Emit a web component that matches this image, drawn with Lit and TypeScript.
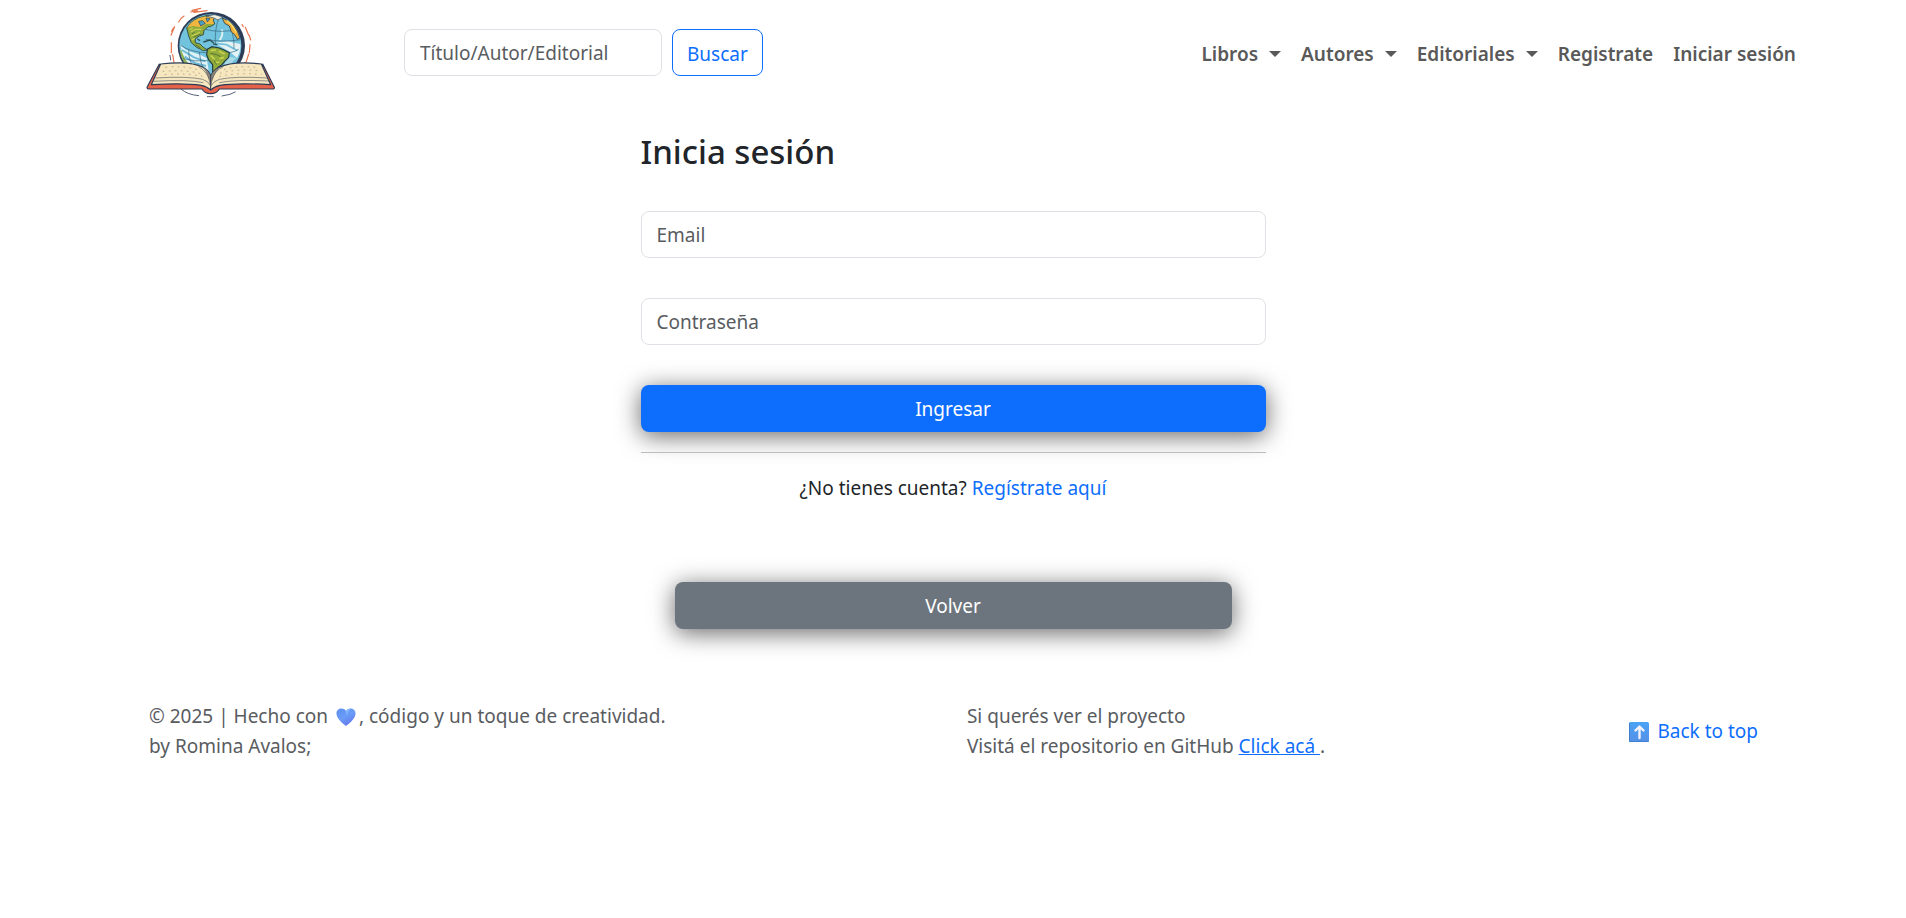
import { LitElement, html, css, svg } from "lit";
import { customElement } from "lit/decorators.js";

const logo = svg`
  <svg class="logo" viewBox="34 20 390 276" role="img" aria-label="Libros del mundo">
    <g fill="none" stroke="#e8754f" stroke-width="3.500" stroke-linecap="round">
      <path d="M168 38 L188 34 M172 33 L198 27 M178 39 L217 34 M132 68 Q138 56 148 50 M109 108 L120 82 M111 96 L116 86 M110 130 L110 160 M114 166 L118 190 M332 84 L342 108 M344 108 L348 122 M346 136 L344 160 M342 164 L334 190 M326 82 L322 76"/>
    </g>
    <g fill="none" stroke="#34435c" stroke-width="2.500" stroke-linecap="round">
      <path d="M140 270 Q158 286 192 289 M218 292 H236 M262 290 Q290 286 302 278 M106 168 L108 182"/>
    </g>
    <circle cx="230" cy="139" r="101" fill="#2c3c57"/>
    <ellipse cx="227" cy="139" rx="93" ry="94" fill="#72c3dd"/>
    <path d="M136 152 Q140 182 158 204 L176 204 Q152 184 142 154Z" fill="#8fb04a"/>
    <path d="M137 136 Q150 150 164 156 L196 166 L216 176 L222 214 H184 Q144 186 137 136Z" fill="#dff2f5"/>
    <path d="M142 152 L178 174 L212 186 M150 172 L182 192 L214 200" fill="none" stroke="#6fbcd8" stroke-width="6"/>
    <path d="M236 130 L280 126 L317 134 Q319 154 307 176 L286 158 L256 140Z" fill="#e3f3f5"/>
    <path d="M240 132 L276 136 L308 154" fill="none" stroke="#72c0da" stroke-width="5"/>
    <path d="M262 90 Q266 112 254 122" fill="none" stroke="#d8f1f4" stroke-width="6"/>
    <path d="M286 172 L304 176 L284 198 L264 206 L272 188Z" fill="#a9d9e4"/>
    <g fill="none" stroke="#336480" stroke-width="2">
      <path d="M252 56 Q240 90 242 134 M276 62 Q300 98 298 148 M212 90 Q258 102 309 90 M213 120 Q258 130 319 121 M138 138 Q166 158 214 160 M162 152 Q162 192 184 212 M194 158 Q196 190 208 212 M146 178 Q180 188 218 184 M284 160 Q300 158 312 150"/>
    </g>
    <path d="M156 86 Q172 58 204 52 L218 48 L242 50 L236 62 L240 74 L228 82 L220 82 L208 94 L206 106 L194 110 L182 118 L182 130 L196 134 L206 144 L219 152 L206 154 L186 144 L170 130 L162 110Z" fill="#92ac3c" stroke="#2a4143" stroke-width="2.500"/>
    <path d="M158 84 Q175 59 206 52 L240 52 L234 62 L238 74 L214 74 L198 84 L176 80Z" fill="#f0b63f"/>
    <path d="M192 66 L204 64 L212 72 L198 80Z M214 56 L226 58 L218 68Z" fill="#4aa1c1" stroke="#28445c" stroke-width="2"/>
    <path d="M214 50 L240 46 L264 53 L250 62 L238 56Z" fill="#f2f1dd" stroke="#34435c" stroke-width="2"/>
    <path d="M262 55 Q304 72 316 116 L308 120 L300 106 L290 98 L284 80 L270 72Z" fill="#eeb03a" stroke="#2c3c4c" stroke-width="2.500"/>
    <path d="M276 64 Q296 78 304 100" fill="none" stroke="#ffdc6c" stroke-width="4"/>
    <path d="M168 98 L182 90 L200 90 M170 110 L186 104 L196 98 M172 122 L180 116 M164 92 L174 86" fill="none" stroke="#c7d152" stroke-width="4"/>
    <path d="M172 104 L180 98 M176 114 L198 104 M182 136 L198 146" fill="none" stroke="#4d6a31" stroke-width="2.500"/>
    <path d="M206 128 L226 122 L238 132 M236 134 L248 136 M188 118 L196 124" fill="none" stroke="#2d5054" stroke-width="4"/>
    <path d="M218 150 L232 142 L254 146 L268 152 L284 160 L282 174 L270 186 L262 196 L250 204 L240 222 L234 218 L234 196 L222 182 L216 166Z" fill="#92ac3c" stroke="#22383e" stroke-width="3.500"/>
    <path d="M228 154 L244 152 M252 156 L270 164 M228 168 L240 180 M254 178 L268 174 M242 190 L254 188" fill="none" stroke="#c8d34c" stroke-width="5"/>
    <path d="M228 162 L246 166 L258 172 M238 184 L246 196" fill="none" stroke="#4a682f" stroke-width="2.500"/>
    <path d="M74 194 L37 264 Q37 269 42 269 H202 Q210 283 228 283 Q246 283 254 269 H414 Q420 269 419 264 L384 194 L380 240 L228 246 L80 240Z" fill="#e4614a" stroke="#2c3c57" stroke-width="3.500" stroke-linejoin="round"/>
    <path d="M78 194 Q168 184 205 204 Q222 213 228 230 Q236 212 254 204 Q294 184 380 194 L408 256 Q302 250 256 258 Q238 262 228 272 Q218 262 200 258 Q150 250 50 256Z" fill="#f6e7bf" stroke="#2c3c57" stroke-width="3.500" stroke-linejoin="round"/>
    <path d="M206 206 Q222 214 228 232 V270 Q222 226 206 206Z M254 206 Q234 214 228 232 V268 Q234 226 254 206Z" fill="#8a8375"/>
    <path d="M228 226 V272" stroke="#2c3c57" stroke-width="3"/>
    <g fill="none" stroke="#5b5f66" stroke-width="2">
      <path d="M62 236 Q160 230 204 240 Q222 246 228 260 Q236 246 254 240 Q300 230 398 236 M56 246 Q160 240 206 250 M254 250 Q300 240 404 245 M192 202 Q214 214 224 240 M266 202 Q240 214 232 240"/>
    </g>
    <g fill="none" stroke="#9b8e70" stroke-width="2">
      <path stroke-dasharray="5 13" d="M92 204 Q150 198 190 212 M84 216 Q156 210 202 224 M90 226 Q160 220 208 232 M268 211 Q300 198 368 204 M256 222 Q300 208 376 214 M254 231 Q300 220 382 225"/>
    </g>
  </svg>`;

const heart = svg`
  <svg class="emoji" viewBox="0 0 20 20" role="img" aria-label="corazón azul">
    <defs>
      <linearGradient id="heart-fill" x1="0" y1="0" x2="0.6" y2="1">
        <stop offset="0" stop-color="#5c8ff0"/><stop offset="0.55" stop-color="#6a9cf8"/><stop offset="1" stop-color="#6678ee"/>
      </linearGradient>
    </defs>
    <path d="M10 19 C8 17.500 1 12.500 0.500 7 C0 1.500 7 -0.500 10 4 C13 -0.500 20 1.500 19.500 7 C19 12.500 12 17.500 10 19Z" fill="url(#heart-fill)"/>
    <path d="M10 4 C11 2.500 13 1.400 15 1.800 C13 3 11.500 6 10.500 9Z" fill="#86b8ff"/>
  </svg>`;

const upArrow = svg`
  <svg class="emoji" viewBox="0 0 20 20" aria-hidden="true">
    <defs>
      <linearGradient id="arrow-fill" x1="0" y1="0" x2="0" y2="1">
        <stop offset="0" stop-color="#4aa3f4"/><stop offset="1" stop-color="#5590e8"/>
      </linearGradient>
    </defs>
    <rect width="20" height="20" rx="1.500" fill="url(#arrow-fill)"/>
    <path d="M0.500 1 V19.500 H19.500" fill="none" stroke="#3f7fcb"/>
    <path d="M10.500 16 V5 M6.500 8.500 L10.500 4.500 L14.500 8.500" fill="none" stroke="#f6f2fb" stroke-width="2.400" stroke-linecap="round" stroke-linejoin="round"/>
  </svg>`;

@customElement("app-root")
export class AppRoot extends LitElement {
  static styles = css`
    :host {
      display: block;
      min-height: 100vh;
      background: #fff;
      color: #212529;
      font: 400 19px/30px "Segoe UI", "Noto Sans", sans-serif;
    }
    * { box-sizing: border-box; }
    a { color: #0d6efd; text-decoration: none; }
    .header {
      display: flex;
      align-items: center;
      padding: 6px 100px 6px 146px;
    }
    .brand { display: block; line-height: 0; margin-right: 128px; }
    .logo { width: 130px; height: 92px; }
    .search { display: flex; gap: 10px; }
    .search .field { width: 258px; padding-top: 9px; }
    .field {
      display: block;
      width: 100%;
      height: 47px;
      padding: 7px 15px;
      border: 1px solid #dee2e6;
      border-radius: 8px;
      background: #fff;
      color: #212529;
      font: inherit;
    }
    .field::placeholder { color: #595c5f; opacity: 1; }
    .button {
      display: block;
      height: 47px;
      padding: 7px 15px;
      border: 1px solid transparent;
      border-radius: 8px;
      font: inherit;
      text-align: center;
      cursor: pointer;
    }
    .outline { padding: 9px 14px 7px; border-color: #0d6efd; background: #fff; color: #0d6efd; }
    .raised { width: 100%; color: #fff; box-shadow: 0 4px 25px rgba(0, 0, 0, 0.6); }
    .primary { background: #0d6efd; }
    .secondary { background: #6c757d; }
    .nav { display: flex; margin-left: auto; }
    .nav-link {
      display: flex;
      align-items: center;
      padding: 12px 10px 9px;
      border: 0;
      background: none;
      color: #595959;
      font: inherit;
      font-weight: 600;
      cursor: pointer;
    }
    .caret {
      margin-left: 11px;
      border: 6px solid transparent;
      border-top-color: currentColor;
      border-bottom: 0;
    }
    .main { width: 33%; min-width: 320px; max-width: 625px; margin: 25px auto 0; }
    .title { margin: 0 0 37px; font-size: 33px; line-height: 45px; font-weight: 500; }
    .form { display: grid; gap: 40px; }
    .rule { height: 1px; margin: 20px 0; border: 0; background: #bcbdbe; position: relative; }
    .signup { margin: 0; text-align: center; }
    .back { margin: 79px 34px 0; }
    .footer {
      display: flex;
      justify-content: space-between;
      align-items: center;
      padding: 72px 148px 40px 149px;
      color: #595c5f;
    }
    .text { margin: 0; }
    .underlined { text-decoration: underline; }
    .emoji { width: 20px; height: 20px; vertical-align: -4px; margin: 0 3px; }
  `;

  private menu(label: string) {
    return html`<button class="nav-link" type="button" aria-haspopup="true">${label}<span class="caret"></span></button>`;
  }

  render() {
    return html`
      <header class="header">
        <a class="brand" href="#">${logo}</a>
        <form class="search" role="search">
          <input class="field" type="search" aria-label="Título/Autor/Editorial" placeholder="Título/Autor/Editorial" />
          <button class="button outline" type="submit">Buscar</button>
        </form>
        <nav class="nav">
          ${["Libros", "Autores", "Editoriales"].map((label) => this.menu(label))}
          <a class="nav-link" href="#">Registrate</a>
          <a class="nav-link" href="#">Iniciar sesión</a>
        </nav>
      </header>
      <main class="main">
        <h1 class="title">Inicia sesión</h1>
        <form class="form">
          <input class="field" type="email" aria-label="Email" placeholder="Email" />
          <input class="field" type="password" aria-label="Contraseña" placeholder="Contraseña" />
          <button class="button raised primary" type="submit">Ingresar</button>
        </form>
        <hr class="rule" />
        <p class="signup">¿No tienes cuenta? <a href="#">Regístrate aquí</a></p>
        <div class="back"><button class="button raised secondary" type="button">Volver</button></div>
      </main>
      <footer class="footer">
        <p class="text">© 2025 | Hecho con ${heart}, código y un toque de creatividad.<br />by Romina Avalos;</p>
        <p class="text">Si querés ver el proyecto<br />Visitá el repositorio en GitHub <a class="underlined" href="#">Click acá </a>.</p>
        <a href="#">${upArrow} Back to top</a>
      </footer>
    `;
  }
}
